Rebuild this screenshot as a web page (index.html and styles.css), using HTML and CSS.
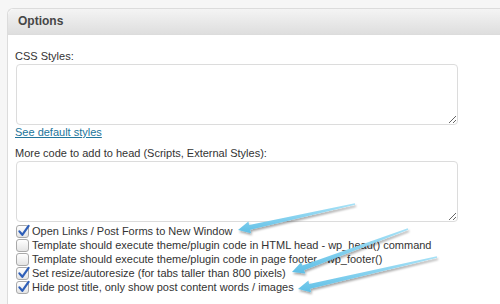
FILE: index.html
```html
<!DOCTYPE html>
<html>
<head>
<meta charset="utf-8">
<link rel="stylesheet" href="styles.css">
</head>
<body>
<div class="panel">
  <div class="panel-head">Options</div>
  <div class="panel-body">
    <div class="label">CSS Styles:</div>
    <textarea class="code"></textarea>
    <a class="link" href="#">See default styles</a>
    <div class="label label2">More code to add to head (Scripts, External Styles):</div>
    <textarea class="code"></textarea>
    <ul class="opts">
      <li><span class="cb on"><svg viewBox="0 0 13 13"><path d="M2.4 6.4 L5.3 9.8 L11.6 0.8" /></svg></span>Open Links / Post Forms to New Window</li>
      <li><span class="cb"></span>Template should execute theme/plugin code in HTML head - wp_head() command</li>
      <li><span class="cb"></span>Template should execute theme/plugin code in page footer - wp_footer()</li>
      <li><span class="cb on"><svg viewBox="0 0 13 13"><path d="M2.4 6.4 L5.3 9.8 L11.6 0.8" /></svg></span>Set resize/autoresize (for tabs taller than 800 pixels)</li>
      <li><span class="cb on"><svg viewBox="0 0 13 13"><path d="M2.4 6.4 L5.3 9.8 L11.6 0.8" /></svg></span>Hide post title, only show post content words / images</li>
    </ul>
  </div>
</div>
<svg class="arrows" width="500" height="304" viewBox="0 0 500 304">
  <defs>
    <filter id="sh" x="-20%" y="-50%" width="140%" height="200%">
      <feDropShadow dx="1" dy="2" stdDeviation="1.3" flood-color="#000" flood-opacity="0.35"/>
    </filter>
    <linearGradient id="bl" x1="0" y1="0" x2="0" y2="1">
      <stop offset="0" stop-color="#a8e2f7"/>
      <stop offset="1" stop-color="#5fbfe6"/>
    </linearGradient>
  </defs>
  <g fill="url(#bl)" filter="url(#sh)">
    <polygon points="354.8,203.2 249.2,225.0 248.4,221.5 238,230 251.0,233.3 250.2,229.8 355.2,204.8"/>
    <polygon points="407.7,228.25 302.3,265.6 301.1,262.3 292,272 305.3,273.5 304.1,270.2 408.3,229.75"/>
    <polygon points="436.8,256.2 309.1,283.9 308.4,280.45 298,289 311.0,292.15 310.3,288.7 437.2,257.8"/>
  </g>
</svg>
</body>
</html>
```

FILE: styles.css
```css
html, body {
  margin: 0;
  padding: 0;
}
body {
  background: #f6f6f6;
  width: 500px;
  height: 304px;
  overflow: hidden;
  position: relative;
  font-family: "Liberation Sans", Arial, sans-serif;
  font-size: 11px;
  color: #333;
}
.panel {
  margin: 8px 0 0 7px;
  width: 493px;
  height: 296px;
  background: #fff;
  border: 1px solid #dcdcdc;
  border-right: none;
  border-bottom: none;
  border-radius: 6px 0 0 0;
  box-sizing: border-box;
  overflow: hidden;
}
.panel-head {
  height: 25px;
  line-height: 25px;
  padding-left: 10px;
  font-size: 12px;
  font-weight: bold;
  color: #464646;
  background: linear-gradient(#f4f4f4, #dedede);
  border-bottom: 1px solid #dcdcdc;
  border-radius: 6px 0 0 0;
}
.panel-body {
  padding: 15px 0 0 7px;
}
.label {
  line-height: 13px;
  height: 13px;
}
.label2 {
  margin-top: 8px;
}
.code {
  display: block;
  width: 442px;
  height: 61px;
  margin: 1px 0 0 1px;
  padding: 0;
  border: 1px solid #dcdcdc;
  border-radius: 4px;
  box-sizing: border-box;
  background: #fff;
  resize: both;
  outline: none;
}
.link {
  display: block;
  line-height: 13px;
  margin-top: 1px;
  color: #21759b;
  text-decoration: underline;
  width: max-content;
}
.opts {
  list-style: none;
  margin: 2px 0 0 0;
  padding: 0;
}
.opts li {
  display: flex;
  align-items: center;
  height: 14px;
  line-height: 14px;
  white-space: nowrap;
  gap: 3px;
}
.cb {
  display: block;
  width: 13px;
  height: 13px;
  margin-left: 1px;
  box-sizing: border-box;
  border: 1px solid #a9a9a9;
  border-radius: 3px;
  background: linear-gradient(#ffffff, #e4e4e4);
  position: relative;
  flex: none;
}
.cb svg {
  position: absolute;
  left: 0;
  top: -1px;
  width: 13px;
  height: 13px;
  overflow: visible;
}
.cb svg path {
  fill: none;
  stroke: #2f5fb8;
  stroke-width: 2.2;
  stroke-linecap: round;
  stroke-linejoin: round;
}
.arrows {
  position: absolute;
  left: 0;
  top: 0;
  pointer-events: none;
}
```
